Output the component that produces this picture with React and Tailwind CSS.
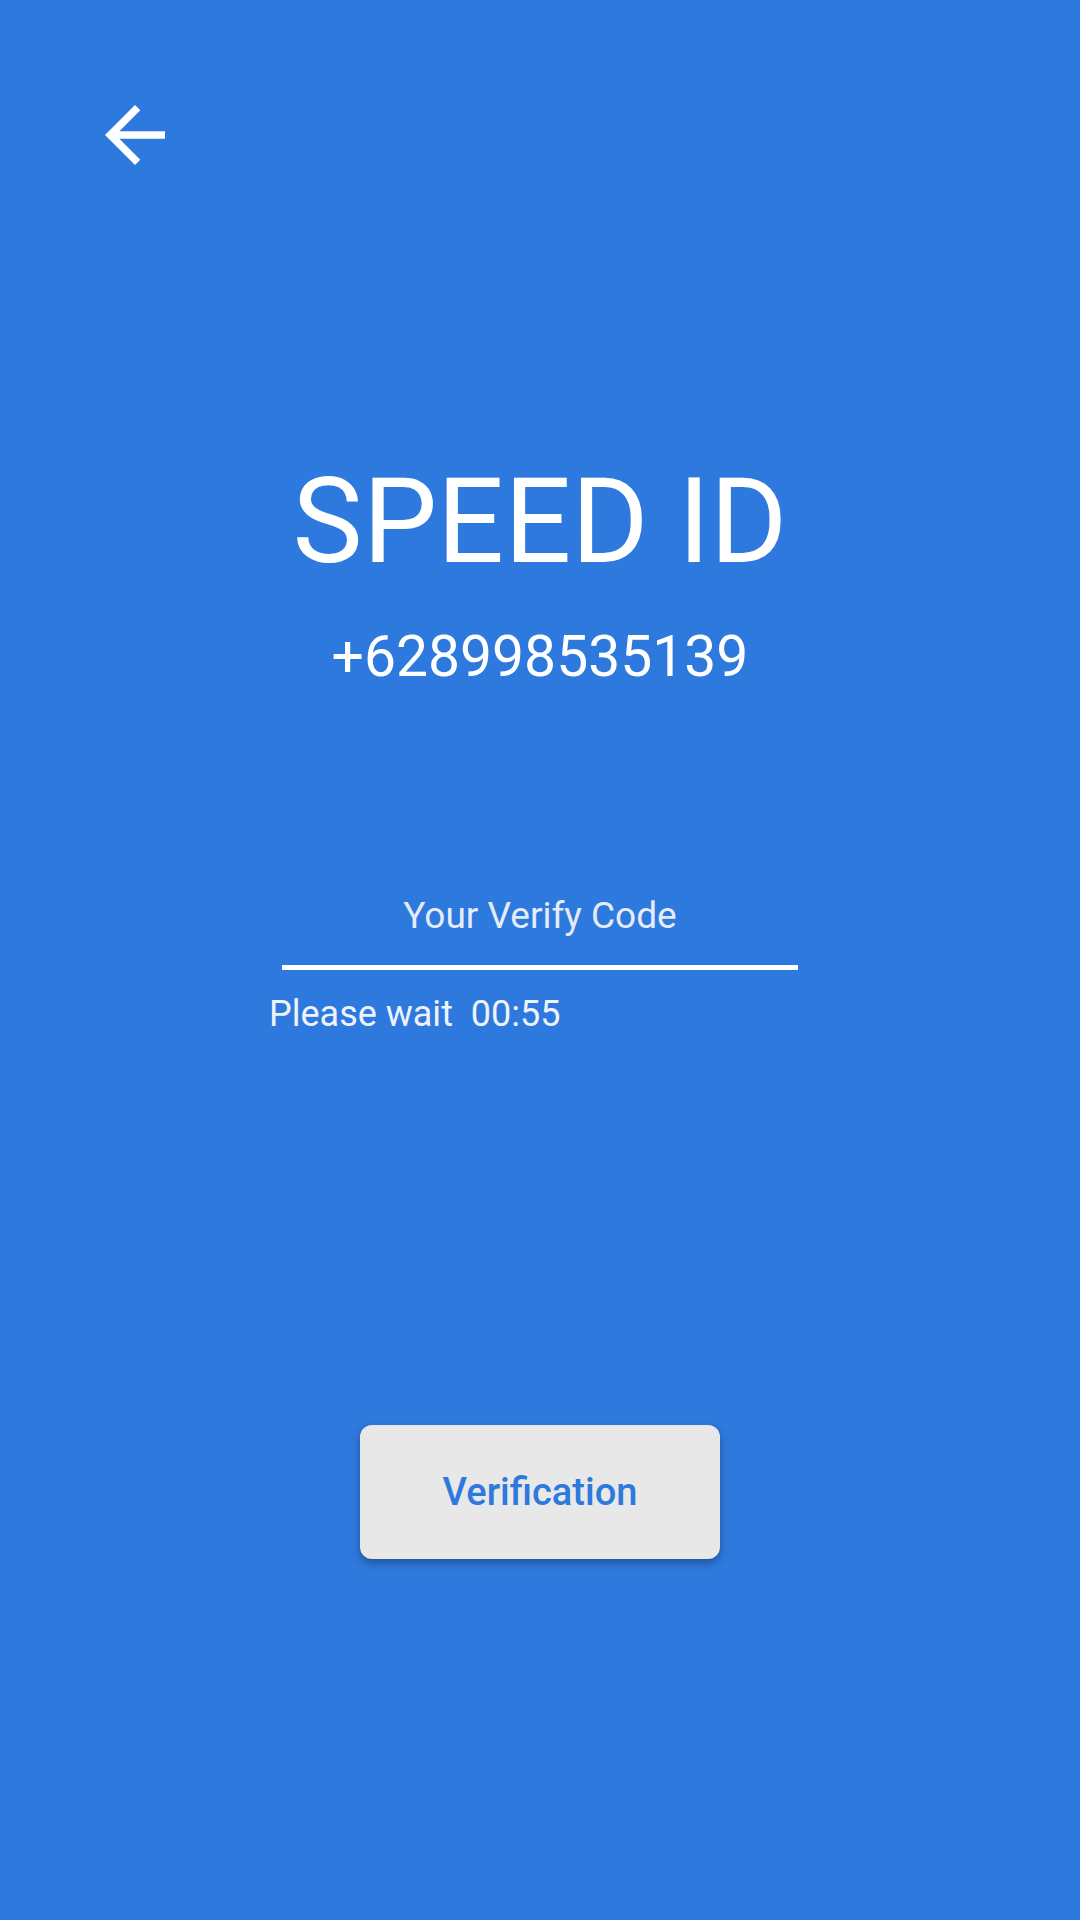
import React from 'react';

/**
 * VerifyScreen - OTP verification page for SPEED ID
 */
function BackArrow() {
  return (
    <svg viewBox="0 0 24 24" className="w-[90px] h-[90px]" fill="#ffffff">
      <path d="M20 11H7.83l5.59-5.59L12 4l-8 8 8 8 1.41-1.41L7.83 13H20v-2z" />
    </svg>
  );
}

function App() {
  return (
    <div
      className="w-[1080px] h-[1920px] bg-[#2e79dd] text-white flex flex-col overflow-hidden"
      style={{ fontFamily: 'Roboto, "Noto Sans", sans-serif' }}
    >
      <button className="mt-[90px] ml-[90px] w-[90px] h-[90px]">
        <BackArrow />
      </button>

      <div className="flex flex-col items-center">
        <h1 className="mt-[283px] text-[118px] leading-none font-normal">SPEED ID</h1>
        <p className="mt-[47px] text-[57px] leading-none">+628998535139</p>
      </div>

      <div className="mt-[212px] self-center w-[516px] flex flex-col">
        <p className="text-[37px] leading-none text-center text-[#e4ecf9]">Your Verify Code</p>
        <div className="mt-[31px] h-[5px] bg-white" />
      </div>

      <p className="mt-[26px] ml-[269px] text-[36px] leading-none whitespace-pre text-[#eef3fb]">
        Please wait  00:55
      </p>

      <button className="mt-[393px] self-center w-[360px] h-[134px] rounded-[12px] bg-[#e8e8e8] shadow-[0_4px_8px_rgba(0,0,0,0.3)] text-[38px] font-medium text-[#2e79dd]">
        Verification
      </button>
    </div>
  );
}

export default App;
